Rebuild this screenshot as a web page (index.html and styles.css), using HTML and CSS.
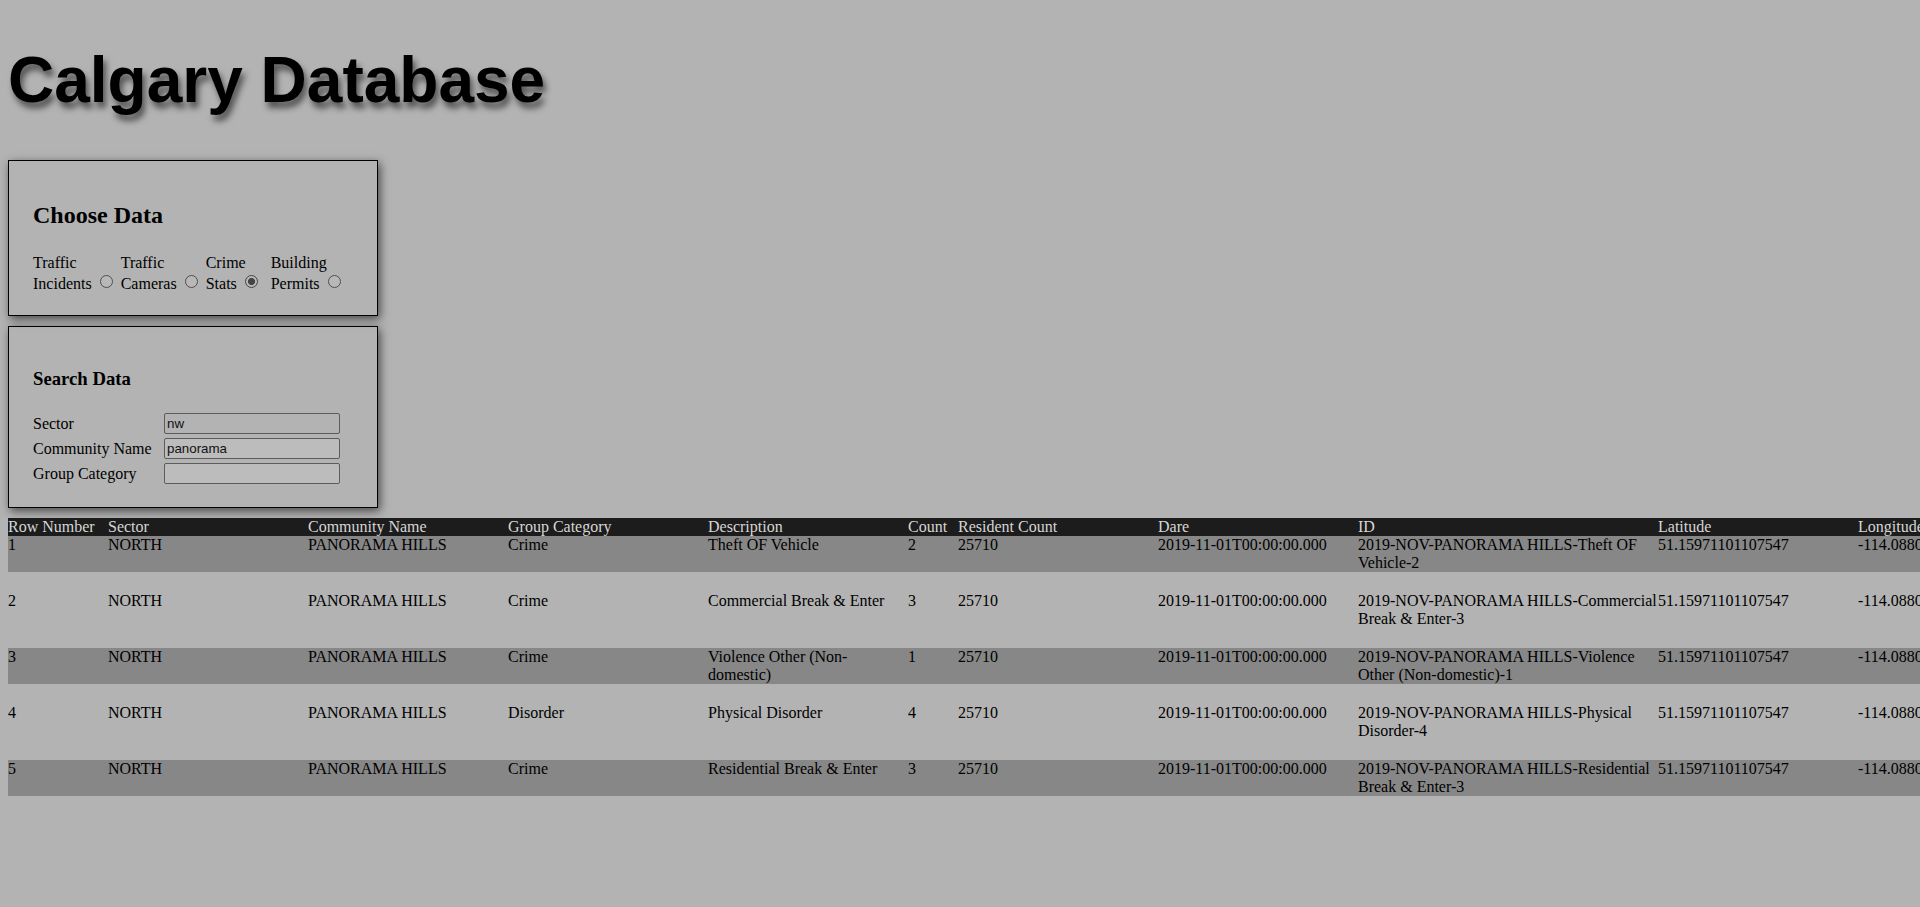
FILE: index.html
```html
<!DOCTYPE html>
<html lang="en">
<head>
<meta charset="utf-8">
<title>Calgary Database</title>
<link rel="stylesheet" href="styles.css">
</head>
<body>
<h1 class="title">Calgary Database</h1>

<section class="panel">
  <h2 class="panel-title">Choose Data</h2>
  <div class="choices">
    <label class="opt">Traffic <span class="nw">Incidents <input class="radio" type="radio" name="ds"></span></label>
    <label class="opt">Traffic <span class="nw">Cameras <input class="radio" type="radio" name="ds"></span></label>
    <label class="opt">Crime <span class="nw">Stats <input class="radio" type="radio" name="ds" checked></span></label>
    <label class="opt">Building <span class="nw">Permits <input class="radio" type="radio" name="ds"></span></label>
  </div>
</section>

<section class="panel">
  <h3 class="panel-sub">Search Data</h3>
  <div class="search">
    <label class="search-label" for="f-sector">Sector</label>
    <input class="field field-dim" id="f-sector" type="text" value="nw">
    <label class="search-label" for="f-comm">Community Name</label>
    <input class="field" id="f-comm" type="text" value="panorama">
    <label class="search-label" for="f-group">Group Category</label>
    <input class="field" id="f-group" type="text" value="">
  </div>
</section>

<div class="table">
  <div class="row head">
    <div>Row Number</div><div>Sector</div><div>Community Name</div><div>Group Category</div><div>Description</div><div>Count</div><div>Resident Count</div><div>Dare</div><div>ID</div><div>Latitude</div><div>Longitude</div>
  </div>
  <div class="row odd">
    <div>1</div><div>NORTH</div><div>PANORAMA HILLS</div><div>Crime</div><div>Theft OF Vehicle</div><div>2</div><div>25710</div><div>2019-11-01T00:00:00.000</div><div>2019-NOV-PANORAMA HILLS-Theft OF Vehicle-2</div><div>51.15971101107547</div><div>-114.08801638437</div>
  </div>
  <div class="row">
    <div>2</div><div>NORTH</div><div>PANORAMA HILLS</div><div>Crime</div><div>Commercial Break &amp; Enter</div><div>3</div><div>25710</div><div>2019-11-01T00:00:00.000</div><div>2019-NOV-PANORAMA HILLS-Commercial Break &amp; Enter-3</div><div>51.15971101107547</div><div>-114.08801638437</div>
  </div>
  <div class="row odd">
    <div>3</div><div>NORTH</div><div>PANORAMA HILLS</div><div>Crime</div><div>Violence Other (Non-domestic)</div><div>1</div><div>25710</div><div>2019-11-01T00:00:00.000</div><div>2019-NOV-PANORAMA HILLS-Violence Other (Non-domestic)-1</div><div>51.15971101107547</div><div>-114.08801638437</div>
  </div>
  <div class="row">
    <div>4</div><div>NORTH</div><div>PANORAMA HILLS</div><div>Disorder</div><div>Physical Disorder</div><div>4</div><div>25710</div><div>2019-11-01T00:00:00.000</div><div>2019-NOV-PANORAMA HILLS-Physical Disorder-4</div><div>51.15971101107547</div><div>-114.08801638437</div>
  </div>
  <div class="row odd">
    <div>5</div><div>NORTH</div><div>PANORAMA HILLS</div><div>Crime</div><div>Residential Break &amp; Enter</div><div>3</div><div>25710</div><div>2019-11-01T00:00:00.000</div><div>2019-NOV-PANORAMA HILLS-Residential Break &amp; Enter-3</div><div>51.15971101107547</div><div>-114.08801638437</div>
  </div>
</div>
</body>
</html>
```

FILE: styles.css
```css
html {
  overflow-x: hidden;
  background: #b3b3b3;
}

body {
  margin: 0;
  padding: 0 8px 8px;
  font-family: "Liberation Serif", "Times New Roman", serif;
  font-size: 16px;
  color: #000;
  background: #b3b3b3;
}

.title {
  font-family: "Liberation Sans", Arial, sans-serif;
  font-size: 64px;
  font-weight: bold;
  margin: 42.88px 0;
  color: #000;
  text-shadow: 3px 6px 6px rgba(0, 0, 0, 0.55);
}

.panel {
  width: 320px;
  padding: 20px 24px 21px;
  border: 1px solid #000;
  box-shadow: 2px 3px 9px rgba(0, 0, 0, 0.6);
  margin-bottom: 10px;
}

.panel + .panel {
  padding-bottom: 23px;
}

.panel-title {
  font-size: 24px;
  font-weight: bold;
  margin: 21px 0 23px;
}

.panel-sub {
  font-size: 18.72px;
  font-weight: bold;
  margin: 21px 0 23.5px;
}

.choices {
  display: grid;
  grid-template-columns: 87.7px 85px 65px 1fr;
  line-height: 21px;
}

.opt {
  min-width: 0;
}

.nw {
  white-space: nowrap;
}

.radio {
  appearance: none;
  -webkit-appearance: none;
  width: 13px;
  height: 13px;
  margin: 0 3px 0 4px;
  border: 1px solid #4f4f4f;
  border-radius: 50%;
  background: #b8b8b8;
  vertical-align: 1px;
  box-sizing: border-box;
}

.radio:checked {
  border-color: #444;
  background: radial-gradient(circle, #454545 0 3.3px, #b8b8b8 3.8px);
}

.search {
  display: grid;
  grid-template-columns: 131px 176px;
  row-gap: 4px;
  align-items: center;
}

.search-label {
  line-height: normal;
}

.field {
  box-sizing: border-box;
  width: 176px;
  height: 21px;
  padding: 1px 2px;
  border: 1px solid #5c5c5c;
  border-radius: 2px;
  background: #bcbcbc;
  font-family: "Liberation Sans", Arial, sans-serif;
  font-size: 13.333px;
  color: #111;
  outline: none;
}

.field-dim {
  background: #b3b3b3;
}

.table {
  width: max-content;
}

.row {
  display: grid;
  grid-template-columns: 100px 200px 200px 200px 200px 50px 200px 200px 300px 200px 200px;
  line-height: normal;
}

.row + .row + .row {
  margin-top: 20px;
}

.row > div {
  min-width: 0;
}

.head {
  background: #1c1c1c;
  color: #d6d6d6;
}

.odd {
  background: #878787;
}
```
